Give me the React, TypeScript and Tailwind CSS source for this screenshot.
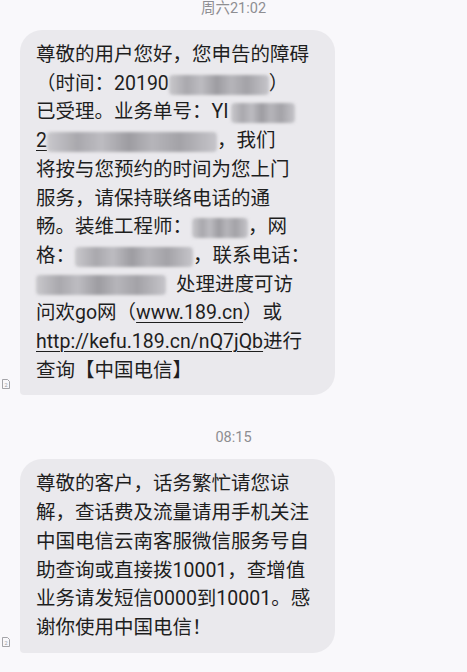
import type { ReactNode } from 'react';

// 打码区域：模拟截图里的马赛克
function Blur({ w, className = '' }: { w: number; className?: string }) {
  return (
    <span
      className={`inline-block align-middle h-[20px] rounded-sm blur-[1.5px] ${className}`}
      style={{
        width: w,
        background:
          'linear-gradient(90deg, #c9c8cc 0%, #a9a8ad 18%, #bdbcc1 32%, #9d9ca1 48%, #b6b5ba 62%, #a3a2a7 78%, #c6c5ca 100%)',
      }}
    />
  );
}

function SimIcon() {
  return (
    <svg width="10" height="10" viewBox="0 0 10 10" className="block">
      <path d="M1.5 0.5h5l2 2v7h-7z" fill="none" stroke="#9a9a9e" strokeWidth="0.9" />
      <text x="5" y="7.6" fontSize="5.5" textAnchor="middle" fill="#9a9a9e" fontFamily="Roboto, sans-serif">
        2
      </text>
    </svg>
  );
}

function Link({ children }: { children: ReactNode }) {
  return <span className="underline decoration-1 underline-offset-[3px]">{children}</span>;
}

function Bubble({ lines }: { lines: ReactNode[] }) {
  return (
    <div className="flex items-end">
      <div className="w-[20px] pl-[1px] mb-[6px]">
        <SimIcon />
      </div>
      <div className="w-[315px] bg-[#eae9ed] rounded-[22px] rounded-bl-[4px] pl-[16px] pr-[8px] pt-[11px] pb-[10px] text-[19.5px] leading-[28.7px] text-[#1e1e1e]">
        {lines.map((l, i) => (
          <div key={i} className="whitespace-nowrap">
            {l}
          </div>
        ))}
      </div>
    </div>
  );
}

function Time({ children, className = '' }: { children: ReactNode; className?: string }) {
  return <div className={`text-center text-[14.5px] leading-[18px] text-[#8e8e92] ${className}`}>{children}</div>;
}

const first: ReactNode[] = [
  '尊敬的用户您好，您申告的障碍',
  <>
    （时间：20190<Blur w={100} />）
  </>,
  <>
    已受理。业务单号：YI<Blur w={64} className="ml-[2px]" />
  </>,
  <>
    <Link>2</Link>
    <Blur w={170} />，我们
  </>,
  '将按与您预约的时间为您上门',
  '服务，请保持联络电话的通',
  <>
    畅。装维工程师：<Blur w={56} />，网
  </>,
  <>
    格：<Blur w={118} />，联系电话：
  </>,
  <>
    <Blur w={130} className="mr-[10px]" />处理进度可访
  </>,
  <>
    问欢go网（<Link>www.189.cn</Link>）或
  </>,
  <>
    <Link>http://kefu.189.cn/nQ7jQb</Link>进行
  </>,
  '查询【中国电信】',
];

const second: ReactNode[] = [
  '尊敬的客户，话务繁忙请您谅',
  '解，查话费及流量请用手机关注',
  '中国电信云南客服微信服务号自',
  '助查询或直接拨10001，查增值',
  '业务请发短信0000到10001。感',
  '谢你使用中国电信！',
];

export default function App() {
  return (
    <div
      className="w-[467px] h-[672px] overflow-hidden bg-[#f9f8fb]"
      style={{ fontFamily: 'Roboto, "Noto Sans CJK SC", sans-serif' }}
    >
      <Time className="pt-[0px]">周六21:02</Time>
      <div className="mt-[12px]">
        <Bubble lines={first} />
      </div>
      <Time className="mt-[34px]">08:15</Time>
      <div className="mt-[12px]">
        <Bubble lines={second} />
      </div>
    </div>
  );
}
